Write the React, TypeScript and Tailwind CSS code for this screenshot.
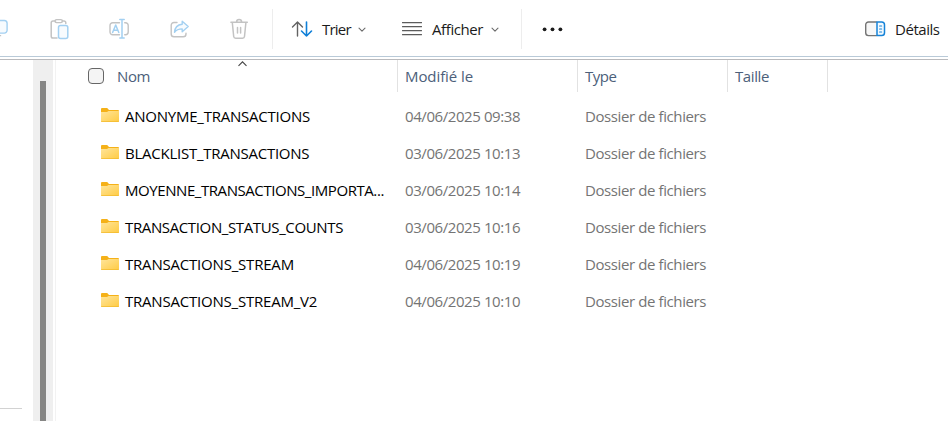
import type { ReactNode } from "react";

type Label = { text: string; track: string };

const rows: { name: Label; date: string }[] = [
  { name: { text: "ANONYME_TRANSACTIONS", track: "tracking-[-0.23px]" }, date: "04/06/2025 09:38" },
  { name: { text: "BLACKLIST_TRANSACTIONS", track: "tracking-[-0.25px]" }, date: "03/06/2025 10:13" },
  { name: { text: "MOYENNE_TRANSACTIONS_IMPORTA...", track: "tracking-[-0.43px]" }, date: "03/06/2025 10:14" },
  { name: { text: "TRANSACTION_STATUS_COUNTS", track: "tracking-[-0.37px]" }, date: "03/06/2025 10:16" },
  { name: { text: "TRANSACTIONS_STREAM", track: "tracking-[-0.2px]" }, date: "04/06/2025 10:19" },
  { name: { text: "TRANSACTIONS_STREAM_V2", track: "tracking-[-0.21px]" }, date: "04/06/2025 10:10" },
];

function Icon({ w, h, children, className = "" }: { w: number; h: number; children: ReactNode; className?: string }) {
  return (
    <svg width={w} height={h} viewBox={`0 0 ${w} ${h}`} fill="none" strokeLinecap="round" strokeLinejoin="round" className={`block shrink-0 ${className}`}>
      {children}
    </svg>
  );
}

const GRAY = "#c3c3c3";
const BLUE = "#a3d0f1";

function CopyIcon() {
  return (
    <Icon w={9} h={20}>
      <path d="M0 2.500h4.300a2.800 2.800 0 0 1 2.800 2.800v7a2.800 2.800 0 0 1-2.800 2.800H0" stroke={BLUE} strokeWidth="1.4" fill="#f7fbfe" />
      <path d="M0 17.700h.6" stroke={GRAY} strokeWidth="1.3" />
    </Icon>
  );
}

function PasteIcon() {
  return (
    <Icon w={20} h={22}>
      <path d="M5.5 3H3a1.8 1.8 0 0 0-1.8 1.8v13.4A1.8 1.8 0 0 0 3 20h4M12.5 3H14a1.8 1.8 0 0 1 1.8 1.8v.7" stroke={GRAY} strokeWidth="1.5" />
      <rect x="5" y="1.6" width="7.4" height="3" rx="1.5" stroke={GRAY} strokeWidth="1.4" />
      <rect x="8.5" y="7.5" width="9.3" height="13" rx="2" stroke={BLUE} strokeWidth="1.5" fill="#f7fbfe" />
    </Icon>
  );
}

function RenameIcon() {
  return (
    <Icon w={22} h={22}>
      <path d="M10.800 4.500H4A2.700 2.700 0 0 0 1.300 7.200v6.500a2.700 2.700 0 0 0 2.700 2.700h6.800M16 4.500h.8a2.700 2.700 0 0 1 2.700 2.700v6.500a2.700 2.700 0 0 1-2.700 2.700H16" transform="translate(-.3 .3)" stroke={GRAY} strokeWidth="1.4" />
      <path d="M3.900 14.500 7 7l3.100 7.500M5 12.200h4M11.100 1.500h4.400M13.300 1.500v18.500M11.100 20h4.400" transform="translate(-.3 0)" stroke={BLUE} strokeWidth="1.500" />
    </Icon>
  );
}

function ShareIcon() {
  return (
    <Icon w={20} h={20}>
      <path d="M7 2.500H4A2.800 2.800 0 0 0 1.200 5.300v8.700A2.800 2.800 0 0 0 4 16.800h9.200a2.800 2.800 0 0 0 2.800-2.800v-.9" stroke={GRAY} strokeWidth="1.4" />
      <path d="M12.200 1.200 18.200 6.500l-6 5.300V8.900C8.800 8.900 6.400 9.700 4.500 12.300 4.800 8 7.500 4.600 12.200 4.200Z" stroke={BLUE} strokeWidth="1.4" fill="#f7fbfe" />
    </Icon>
  );
}

function TrashIcon() {
  return (
    <Icon w={20} h={22}>
      <path d="M.900 4.300h16.400M6.600 4a2.500 2.500 0 0 1 5 0M2.300 4.500l1.400 14A2 2 0 0 0 5.700 20.300h6.800a2 2 0 0 0 2-1.800l1.400-14M7.500 9.500v5.500M10.600 9.500v5.500" stroke={GRAY} strokeWidth="1.5" />
    </Icon>
  );
}

function SortIcon() {
  return (
    <Icon w={22} h={18}>
      <path d="M6.500 16V2M1.500 7l5-5 5 5" stroke="#626262" strokeWidth="1.400" />
      <path d="M15.500 2v14M10.500 11l5 5 5-5" stroke="#0f7fd8" strokeWidth="1.600" />
    </Icon>
  );
}

function LinesIcon() {
  return (
    <Icon w={20} h={14}>
      <path d="M.5.600h19M.5 4.600h19M.5 8.600h19M.5 12.600h19" stroke="#5c5c5c" strokeWidth="1.300" />
    </Icon>
  );
}

function Chevron() {
  return (
    <Icon w={8} h={6} className="relative top-px">
      <path d="M1 1.200l3 3 3-3" stroke="#6c6c6c" strokeWidth="1.100" />
    </Icon>
  );
}

function DetailsIcon() {
  return (
    <Icon w={22} h={16}>
      <path d="M12.500 1H4.500a2.800 2.800 0 0 0-2.800 2.800v8A2.800 2.800 0 0 0 4.500 14.600h8" stroke="#747474" strokeWidth="1.400" fill="#f7f7f7" />
      <path d="M13 1h4.700a2.800 2.800 0 0 1 2.800 2.800v8a2.800 2.800 0 0 1-2.800 2.800H13z" stroke="#1683d8" strokeWidth="1.500" fill="#f3faff" />
      <path d="M15.600 5h2M15.600 8h2M15.600 11h2" stroke="#1683d8" strokeWidth="1.200" />
    </Icon>
  );
}

function FolderIcon() {
  return (
    <Icon w={18} h={14}>
      <defs>
        <linearGradient id="folder" x1="0" y1="0" x2="1" y2="1">
          <stop stopColor="#ffe59b" />
          <stop offset="1" stopColor="#ffcb43" />
        </linearGradient>
      </defs>
      <path d="M0 1Q0 0 1 0h5.200L8 2h9q1 0 1 1v10H0Z" fill="#f5b118" />
      <path d="M0 4h6l1.500-1H18v10q0 1-1 1H1q-1 0-1-1Z" fill="url(#folder)" />
      <path d="M.5 13.600h17" stroke="#f2b92d" strokeWidth=".8" />
    </Icon>
  );
}

function Toolbar() {
  return (
    <header className="flex h-[57px] shrink-0 items-start border-b border-[#b9cad8] pt-[9px] text-[#1b1b1b]">
      <div className="flex h-10 w-[273px] shrink-0 items-start border-r border-[#ededed] pt-[9px]">
        <div className="w-[50px]"><CopyIcon /></div>
        <div className="w-[59px]"><PasteIcon /></div>
        <div className="w-[61px]"><RenameIcon /></div>
        <div className="w-[60px] pt-[2px]"><ShareIcon /></div>
        <TrashIcon />
      </div>
      <div className="flex h-10 w-[249px] shrink-0 items-center border-r border-[#ededed] pl-[18px]">
        <SortIcon />
        <span className="ml-[9px] w-[36px] tracking-[-0.8px]">Trier</span>
        <Chevron />
        <div className="ml-[36px]"><LinesIcon /></div>
        <span className="ml-[10px] w-[59px] tracking-[-0.4px]">Afficher</span>
        <Chevron />
      </div>
      <div className="flex h-10 flex-1 items-center pl-5">
        <Icon w={22} h={6}>
          <circle cx="2.600" cy="3.300" r="1.900" fill="#1b1b1b" />
          <circle cx="10.500" cy="3.300" r="1.900" fill="#1b1b1b" />
          <circle cx="18.400" cy="3.300" r="1.900" fill="#1b1b1b" />
        </Icon>
      </div>
      <div className="flex h-10 w-[84px] shrink-0 items-center">
        <DetailsIcon />
        <span className="ml-[9px] tracking-[-0.45px]">Détails</span>
      </div>
    </header>
  );
}

function HeaderCell({ label, className }: { label: string; className: string }) {
  return <div className={`flex h-8 shrink-0 items-center border-r border-[#e2e2e2] pl-[7px] ${className}`}>{label}</div>;
}

export default function App() {
  return (
    <div className="flex h-[421px] w-[948px] flex-col overflow-hidden bg-white font-['Open_Sans','Noto_Sans',sans-serif] text-[15px] leading-5 whitespace-nowrap">
      <Toolbar />
      <div className="mt-[2px] flex min-h-0 flex-1 border-t border-[#b9babd]">
        <aside className="flex w-[33px] shrink-0 flex-col justify-end pb-3">
          <div className="h-px w-[22px] bg-[#d2d2d2]" />
        </aside>
        <div className="flex w-5 shrink-0 justify-center bg-[#efefef] pt-[21px]">
          <div className="w-[6px] bg-[#868685]" />
        </div>
        <main className="ml-[2px] min-w-0 flex-1 border-l border-[#f2f2f2]">
          <div className="relative flex text-[#4c607a]">
            <svg width="10" height="6" viewBox="0 0 10 6" fill="none" className="absolute top-px left-[182px]">
              <path d="M.5 4.800 4.500.800l4 4" stroke="#444444" strokeWidth="1.100" />
            </svg>
            <div className="flex h-8 w-[342px] shrink-0 items-center border-r border-[#e2e2e2] pl-8">
              <div className="size-4 rounded-[4px] border border-[#666666] bg-[#f4f4f4]" />
              <span className="ml-[13px] tracking-[-0.4px]">Nom</span>
            </div>
            <HeaderCell label="Modifié le" className="w-[180px] tracking-[-0.08px]" />
            <HeaderCell label="Type" className="w-[150px] tracking-[-0.5px]" />
            <HeaderCell label="Taille" className="w-[100px] tracking-[-0.4px]" />
          </div>
          <div className="pt-[5px] text-[#747474]">
            {rows.map((r) => (
              <div key={r.name.text} className="flex h-[37px] items-center">
                <div className="ml-[45px] pb-px"><FolderIcon /></div>
                <span className={`ml-[6px] w-[280px] shrink-0 text-black ${r.name.track}`}>{r.name.text}</span>
                <span className="w-[180px] shrink-0 tracking-[-0.42px]">{r.date}</span>
                <span className="tracking-[-0.4px]">Dossier de fichiers</span>
              </div>
            ))}
          </div>
        </main>
      </div>
    </div>
  );
}
